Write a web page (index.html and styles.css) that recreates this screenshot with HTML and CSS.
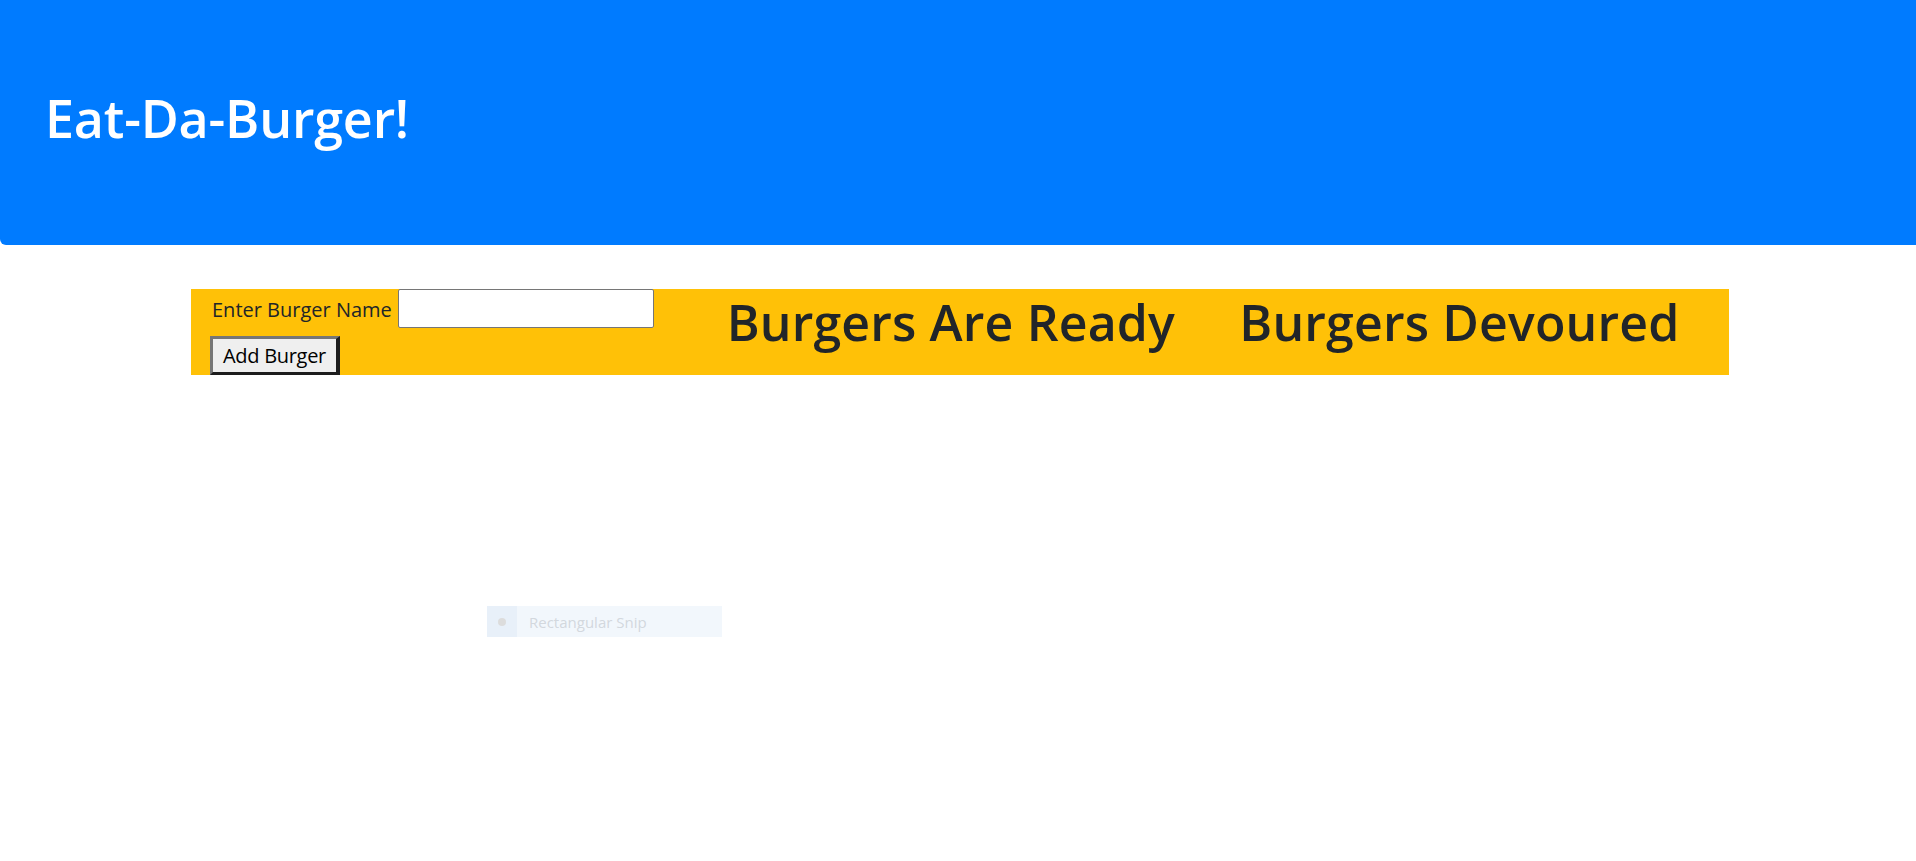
FILE: index.html
```html
<!DOCTYPE html>
<html lang="en">
<head>
<meta charset="utf-8">
<title>Eat-Da-Burger!</title>
<link rel="stylesheet" href="styles.css">
</head>
<body>
<header class="jumbotron">
  <h1 class="title">Eat-Da-Burger!</h1>
</header>
<main class="container">
  <div class="row">
    <div class="col">
      <form class="add-form">
        <div class="field">
          <label class="label" for="burger">Enter Burger Name</label>
          <input class="input" id="burger" type="text">
        </div>
        <button class="btn" type="button">Add Burger</button>
      </form>
    </div>
    <div class="col">
      <h1 class="heading">Burgers Are Ready</h1>
    </div>
    <div class="col">
      <h1 class="heading">Burgers Devoured</h1>
    </div>
  </div>
</main>
<div class="snip">
  <span class="snip-icon"><span class="snip-dot"></span></span>
  <span class="snip-text">Rectangular Snip</span>
</div>
</body>
</html>
```
FILE: styles.css
```css
* { box-sizing: border-box; }
html, body {
  margin: 0;
  padding: 0;
  background: #fff;
  font-family: "Open Sans", "Noto Sans", sans-serif;
  color: #212529;
}
.jumbotron {
  height: 245px;
  background: #007bff;
  border-bottom-left-radius: 6px;
  padding: 88px 40px 0 45px;
}
.title {
  margin: 0;
  color: #fff;
  font-size: 52px;
  font-weight: 600;
  line-height: 60px;
  letter-spacing: -0.2px;
}
.container {
  width: 1538px;
  margin: 44px 0 0 191px;
}
.row {
  display: flex;
  background: #ffc107;
  height: 86px;
}
.col {
  flex: 1 1 0;
  padding: 0 19px;
}
.add-form {
  display: flex;
  flex-direction: column;
  align-items: flex-start;
}
.field {
  display: flex;
  align-items: center;
  height: 39px;
}
.label {
  font-size: 20px;
  margin-right: 6px;
  padding-left: 2px;
  padding-top: 2px;
  letter-spacing: 0;
}
.input {
  width: 256px;
  height: 39px;
  border: 1px solid #767676;
  border-radius: 2px;
  background: #fff;
  margin: 0;
}
.btn {
  margin-top: 8px;
  width: 130px;
  height: 39px;
  padding: 0;
  font-family: "Open Sans", "Noto Sans", sans-serif;
  font-size: 20px;
  letter-spacing: -0.3px;
  color: #000;
  background: #efefef;
  border-style: solid;
  border-width: 3px 4px 3px 3px;
  border-color: #767676 #1d1d1d #1d1d1d #767676;
}
.heading {
  margin: 0;
  padding: 3px 0 0 4px;
  font-size: 50px;
  font-weight: 600;
  line-height: 60px;
  letter-spacing: 0.15px;
  color: #212529;
}
.snip {
  position: absolute;
  left: 487px;
  top: 606px;
  width: 235px;
  height: 31px;
  display: flex;
  align-items: center;
  background: #f2f7fc;
}
.snip-icon {
  width: 30px;
  height: 31px;
  display: flex;
  align-items: center;
  justify-content: center;
  background: #e8f0f9;
}
.snip-dot {
  width: 8px;
  height: 8px;
  border-radius: 50%;
  background: #dcdcdc;
}
.snip-text {
  margin-left: 12px;
  font-size: 15px;
  color: #d3d8de;
}
```
